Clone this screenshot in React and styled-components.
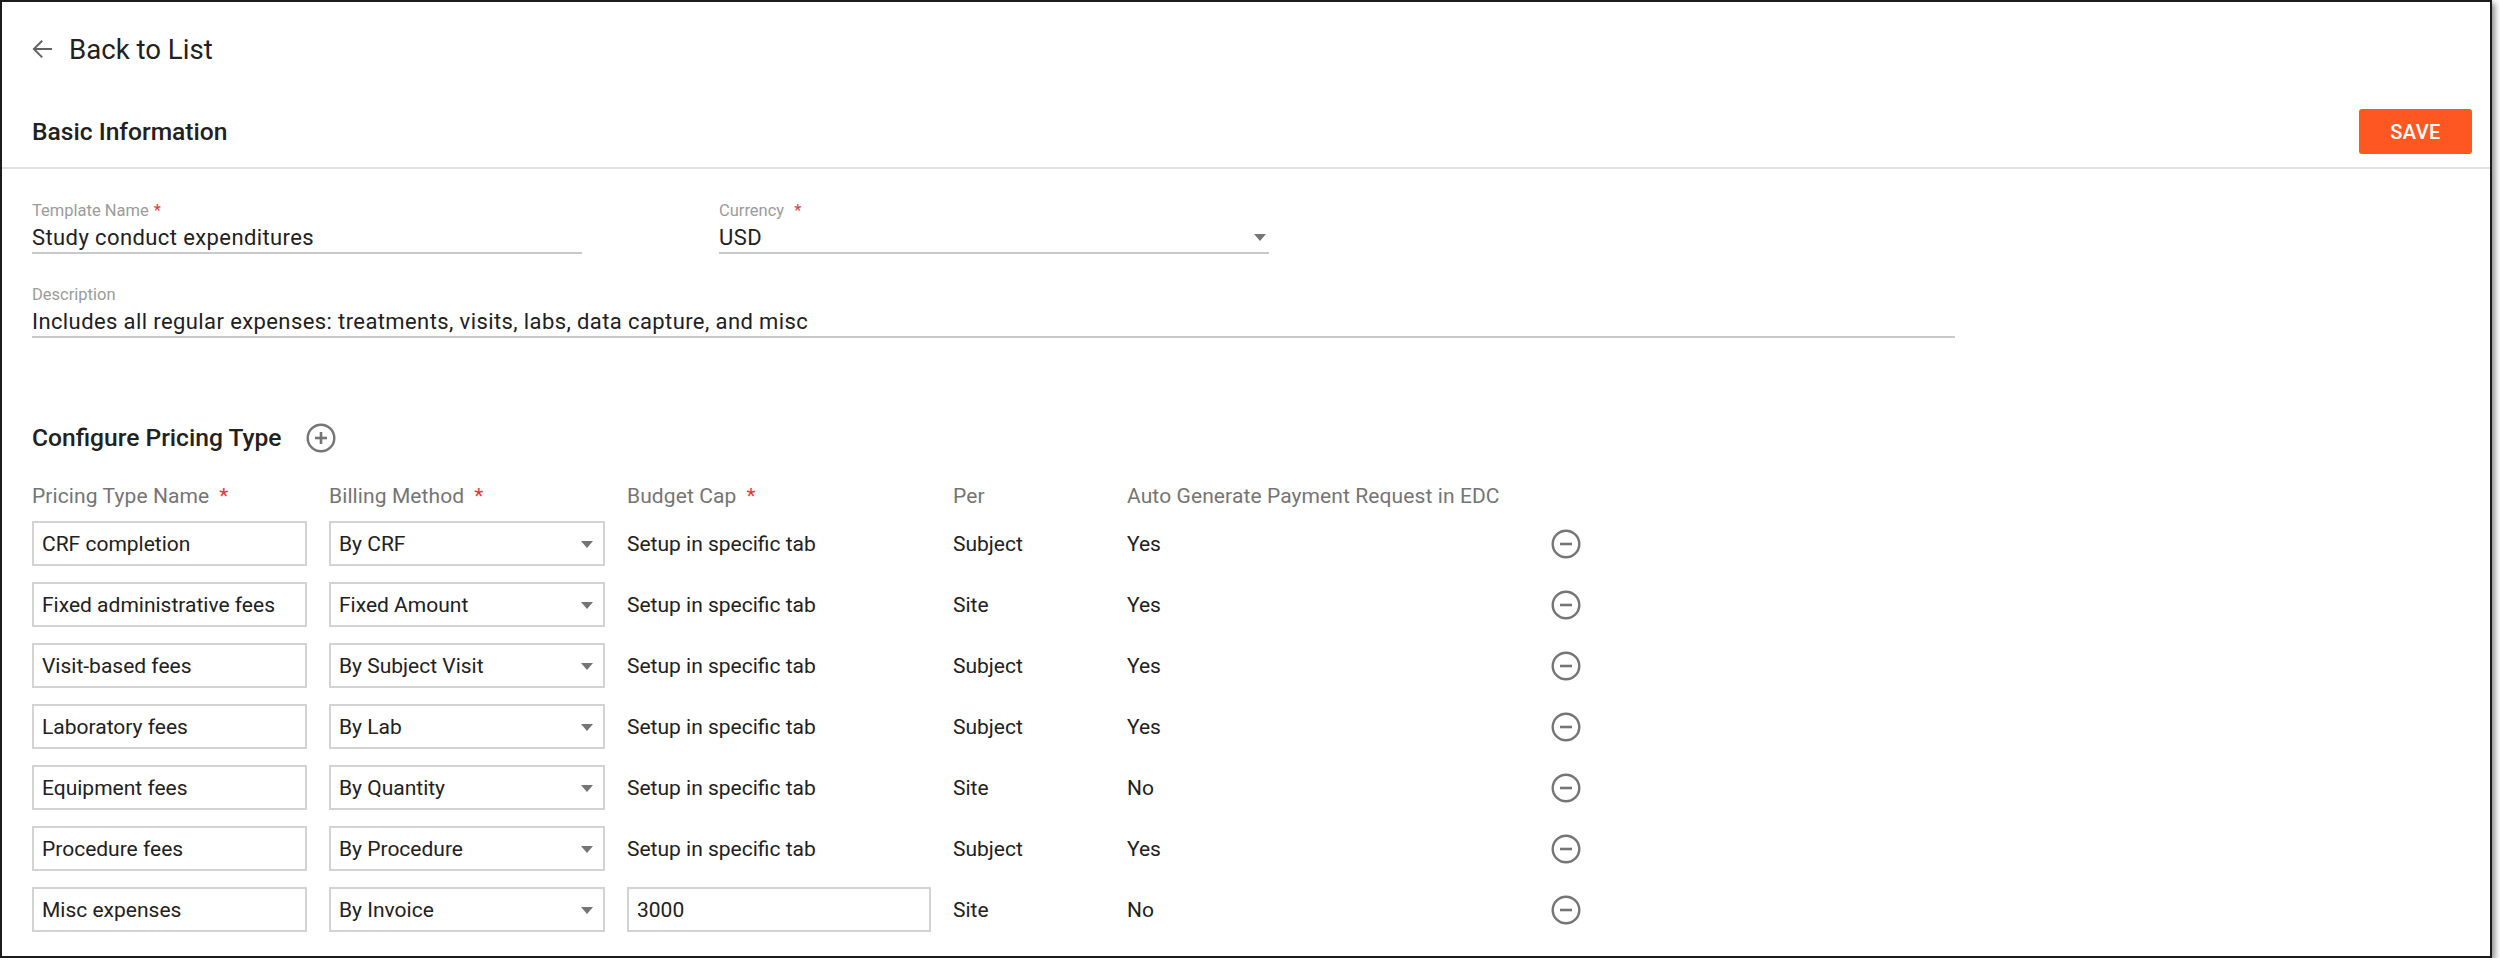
import React from 'react';
import styled, { createGlobalStyle } from 'styled-components';

const GlobalStyle = createGlobalStyle`
  body {
    margin: 0;
    background: #fff;
    font-family: Roboto, "Noto Sans", Arial, sans-serif;
    color: #212121;
  }
`;

const Frame = styled.div`
  box-sizing: border-box;
  width: 2492px;
  height: 958px;
  border: 2px solid #1c1c1c;
  box-shadow: 3px 3px 6px rgba(0, 0, 0, 0.45);
  background: #fff;
`;

const BackRow = styled.div`
  display: flex;
  align-items: center;
  gap: 12px;
  height: 94px;
  padding-left: 25px;
  font-size: 27.6px;
  color: #212121;
`;

const HeaderRow = styled.div`
  display: flex;
  align-items: center;
  justify-content: space-between;
  height: 71px;
  padding: 0 18px 0 30px;
  border-bottom: 2px solid #e2e2e2;
`;

const Title = styled.h2`
  margin: 0;
  font-size: 24.6px;
  line-height: 32px;
  font-weight: 500;
  color: #212121;
  display: flex;
  align-items: center;
  gap: 24px;
`;

const SaveButton = styled.button`
  width: 113px;
  height: 45px;
  border: none;
  border-radius: 3px;
  background: #ff5722;
  color: #fff;
  font-family: inherit;
  font-size: 20px;
  font-weight: 500;
  letter-spacing: 0.4px;
`;

const Body = styled.div`
  padding: 32px 30px 0;
`;

const FieldRow = styled.div`
  display: flex;
  gap: 137px;
  margin-bottom: 31px;
`;

const Field = styled.div`
  width: ${p => p.$width}px;
  display: flex;
  flex-direction: column;
`;

const FieldLabel = styled.label`
  font-size: 16.5px;
  line-height: 20px;
  color: #9b9b9b;
`;

const Star = styled.span`
  color: #e53935;
  margin-left: ${p => p.$gap || 5}px;
`;

const FieldValue = styled.div`
  position: relative;
  font-size: 22px;
  line-height: 28px;
  letter-spacing: 0.4px;
  padding-top: 3px;
  border-bottom: 2px solid #c9c9c9;
  color: #212121;
`;

const Caret = styled.span`
  position: absolute;
  right: ${p => p.$right || 2}px;
  top: 50%;
  margin-top: -3px;
  width: 0;
  height: 0;
  border-left: 6px solid transparent;
  border-right: 6px solid transparent;
  border-top: 7px solid #757575;
`;

const Section = styled.div`
  margin-top: 84px;
`;

const Grid = styled.div`
  display: grid;
  grid-template-columns: 275px 276px 304px 152px 402px 30px;
  column-gap: 22px;
  row-gap: 16px;
  align-items: center;
  margin-top: 28px;
`;

const HeadCell = styled.div`
  font-size: 21px;
  line-height: 28px;
  letter-spacing: 0.1px;
  color: #757575;
  margin-bottom: -5px;
`;

const Box = styled.div`
  position: relative;
  box-sizing: border-box;
  height: 45px;
  display: flex;
  align-items: center;
  padding: 0 8px;
  border: 2px solid #d3d3d3;
  font-size: 21px;
  color: #212121;
  background: #fff;
`;

const Cell = styled.div`
  font-size: 21px;
  color: #212121;
`;

const IconButton = styled.span`
  display: inline-flex;
  width: 30px;
  height: 30px;
`;

const ArrowBack = () => (
  <svg width="30" height="30" viewBox="0 0 24 24" fill="#616161">
    <path d="M20 11.2H7.4l5.3-5.3-1.1-1.1L4.4 12l7.2 7.2 1.1-1.1-5.3-5.3H20z" />
  </svg>
);

const CircleIcon = ({ plus }) => (
  <IconButton>
    <svg width="30" height="30" viewBox="0 0 30 30" fill="none" stroke="#757575" strokeWidth="2.4">
      <circle cx="15" cy="15" r="13.3" />
      <line x1="9" y1="15" x2="21" y2="15" strokeWidth="2.6" />
      {plus && <line x1="15" y1="9" x2="15" y2="21" strokeWidth="2.6" />}
    </svg>
  </IconButton>
);

const pricing = [
  { name: 'CRF completion', method: 'By CRF', cap: null, per: 'Subject', auto: 'Yes' },
  { name: 'Fixed administrative fees', method: 'Fixed Amount', cap: null, per: 'Site', auto: 'Yes' },
  { name: 'Visit-based fees', method: 'By Subject Visit', cap: null, per: 'Subject', auto: 'Yes' },
  { name: 'Laboratory fees', method: 'By Lab', cap: null, per: 'Subject', auto: 'Yes' },
  { name: 'Equipment fees', method: 'By Quantity', cap: null, per: 'Site', auto: 'No' },
  { name: 'Procedure fees', method: 'By Procedure', cap: null, per: 'Subject', auto: 'Yes' },
  { name: 'Misc expenses', method: 'By Invoice', cap: '3000', per: 'Site', auto: 'No' },
];

export default function App() {
  return (
    <>
      <GlobalStyle />
      <Frame>
        <BackRow>
          <ArrowBack />
          <span>Back to List</span>
        </BackRow>
        <HeaderRow>
          <Title>Basic Information</Title>
          <SaveButton>SAVE</SaveButton>
        </HeaderRow>
        <Body>
          <FieldRow>
            <Field $width={550}>
              <FieldLabel>Template Name<Star $gap={5}>*</Star></FieldLabel>
              <FieldValue>Study conduct expenditures</FieldValue>
            </Field>
            <Field $width={550}>
              <FieldLabel>Currency<Star $gap={10}>*</Star></FieldLabel>
              <FieldValue>USD<Caret $right={3} /></FieldValue>
            </Field>
          </FieldRow>
          <FieldRow>
            <Field $width={1923}>
              <FieldLabel>Description</FieldLabel>
              <FieldValue>Includes all regular expenses: treatments, visits, labs, data capture, and misc</FieldValue>
            </Field>
          </FieldRow>

          <Section>
            <Title>
              Configure Pricing Type
              <CircleIcon plus />
            </Title>
            <Grid>
              <HeadCell>Pricing Type Name<Star $gap={10}>*</Star></HeadCell>
              <HeadCell>Billing Method<Star $gap={10}>*</Star></HeadCell>
              <HeadCell>Budget Cap<Star $gap={10}>*</Star></HeadCell>
              <HeadCell>Per</HeadCell>
              <HeadCell>Auto Generate Payment Request in EDC</HeadCell>
              <span />
              {pricing.map(row => (
                <React.Fragment key={row.name}>
                  <Box>{row.name}</Box>
                  <Box>
                    {row.method}
                    <Caret $right={10} />
                  </Box>
                  {row.cap ? <Box>{row.cap}</Box> : <Cell>Setup in specific tab</Cell>}
                  <Cell>{row.per}</Cell>
                  <Cell>{row.auto}</Cell>
                  <CircleIcon />
                </React.Fragment>
              ))}
            </Grid>
          </Section>
        </Body>
      </Frame>
    </>
  );
}
